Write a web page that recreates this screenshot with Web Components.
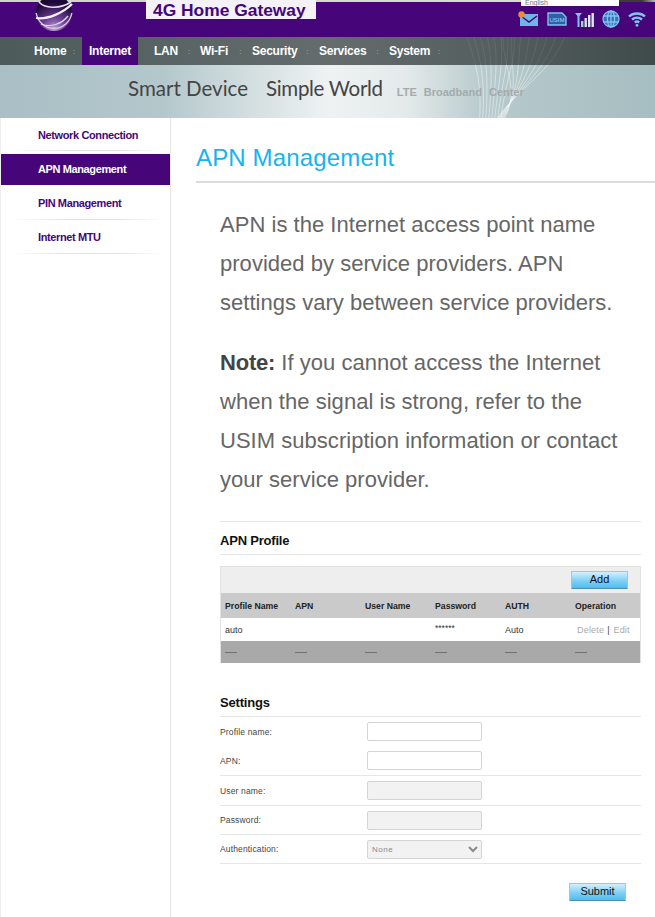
<!DOCTYPE html>
<html>
<head>
<meta charset="utf-8">
<title>APN Management</title>
<style>
html, body { margin: 0; padding: 0; background: #fff; }
body { font-family: "Liberation Sans", Arial, sans-serif; width: 655px; height: 917px; overflow: hidden; }
</style>
</head>
<body>
<gw-header></gw-header>
<gw-nav></gw-nav>
<gw-banner></gw-banner>
<gw-layout>
  <gw-sidebar slot="side"></gw-sidebar>
  <gw-intro></gw-intro>
  <gw-profile-table></gw-profile-table>
  <gw-settings></gw-settings>
</gw-layout>

<script>
class GwHeader extends HTMLElement {
  constructor() {
    super();
    this.attachShadow({mode: 'open'});
    this.shadowRoot.innerHTML = `
<style>
:host { display: block; height: 37px; overflow: hidden; }
.strip { height: 2px; background: linear-gradient(90deg, #cfd4c8 0, #d8dcd2 80%, #3c3c38 92%, #3c3c38 98%, #b8bcb0 100%); }
.bar { height: 35px; background: #46067a; display: flex; align-items: flex-start; }
.logo { width: 38px; height: 33px; margin: -2px 0 0 35px; flex: none; display: block; }
.name { margin: -2px 0 0 73px; width: 170px; height: 19px; box-sizing: border-box; background: #f4f2f6; color: #46067a;
  font-size: 17.4px; font-weight: 700; line-height: 20px; padding-left: 7px; flex: none; white-space: nowrap; }
.right { margin-left: 205px; width: 136px; flex: none; }
.lang { margin: -2px 0 0 0; width: 98px; height: 6px; background: #fff; color: #777; font-size: 7px; line-height: 5px; padding-left: 4px; box-sizing: border-box; overflow: hidden; white-space: nowrap; }
.icons { display: flex; gap: 8px; margin: 4px 0 0 -3px; align-items: center; }
svg { display: block; flex: none; }
</style>
<div class="strip"></div>
<div class="bar">
  <svg class="logo" viewBox="0 0 38 33">
    <defs>
      <radialGradient id="b" cx="0.5" cy="0.95" r="0.75"><stop offset="0" stop-color="#b9a0cf"/><stop offset="0.45" stop-color="#6e3f96"/><stop offset="1" stop-color="#1e0838"/></radialGradient>
    </defs>
    <circle cx="19" cy="13" r="18" fill="url(#b)"/>
    <path d="M1.2 13 A18 18 0 0 0 36.8 13" fill="none" stroke="#d9c8e6" stroke-width="1.4"/>
    <path d="M1 18 C12 20 28 13 37 4" fill="none" stroke="#f7f2fa" stroke-width="2.2"/>
    <path d="M4 2 C9 8 24 10 36 2" fill="none" stroke="#eadff2" stroke-width="1.6"/>
    <path d="M6 24 C15 28 27 24 33 16" fill="none" stroke="#e2d4ec" stroke-width="1.3"/>
  </svg>
  <div class="name">4G Home Gateway</div>
  <div class="right">
    <div class="lang">English</div>
    <div class="icons">
      <svg width="21" height="16" viewBox="0 0 21 16">
        <rect x="2" y="3" width="18" height="12" fill="#6fb6e8"/>
        <path d="M3 5 L11 11 L19 5" fill="none" stroke="#46067a" stroke-width="1.5"/>
        <circle cx="3.5" cy="3.5" r="3.2" fill="#f08a2c"/>
      </svg>
      <svg width="20" height="14" viewBox="0 0 20 14">
        <path d="M1 1 H15 L19 5 V13 H1 Z" fill="#2f5fa8" stroke="#7fc4ee" stroke-width="1.4"/>
        <text x="10" y="10" font-size="6" font-family="Liberation Sans" fill="#a5d8f5" text-anchor="middle">USIM</text>
      </svg>
      <svg width="19" height="15" viewBox="0 0 19 15">
        <path d="M0 1 H7 L4.5 4 V15 H2.5 V4 Z" fill="#7fc4ee"/>
        <rect x="6" y="9" width="2.4" height="6" fill="#9ed4c8"/>
        <rect x="9.5" y="6" width="2.4" height="9" fill="#cfe6ee"/>
        <rect x="13" y="3" width="2.4" height="12" fill="#dfe6f2"/>
        <rect x="16.5" y="1" width="2.4" height="14" fill="#dfe6f2"/>
      </svg>
      <svg width="18" height="18" viewBox="0 0 18 18" fill="#3a6fb8" stroke="#7fc4ee" stroke-width="1.3">
        <circle cx="9" cy="9" r="8"/>
        <ellipse cx="9" cy="9" rx="3.6" ry="8" fill="none"/>
        <path d="M9 1 V17 M1.5 6 H16.5 M1.5 12 H16.5" fill="none"/>
      </svg>
      <svg width="18" height="15" viewBox="0 0 18 15" fill="none" stroke="#7fc4ee" stroke-width="2.4">
        <path d="M1 4.5 C5 0.5 13 0.5 17 4.5"/>
        <path d="M4 7.5 C7 5 11 5 14 7.5"/>
        <path d="M6.8 10.5 C8 9.5 10 9.5 11.2 10.5"/>
        <circle cx="9" cy="13.3" r="1.4" fill="#7fc4ee" stroke="none"/>
      </svg>
    </div>
  </div>
</div>`;
  }
}
customElements.define('gw-header', GwHeader);

// label, left margin, width, width of the separator after it, active
const navItems = [
  ['Home', 34, 32, 16], ['Internet', 0, 56, 0, 1], ['LAN', 16, 24, 22], ['Wi-Fi', 0, 29, 23],
  ['Security', 0, 44, 23], ['Services', 0, 47, 23], ['System', 0, 41, 18]
];

// curves of the decoration that runs through nav and banner, both svgs start at x=465
function fanCurves(top, bottom) {
  let s = '';
  for (let i = 0; i < 8; i++) {
    s += `<path d="M${i * 7} ${top} C${i * 6 + 10} ${top + 30} ${18 + i * 3} ${top + 50} ${14 + i * 3} ${bottom}"/>`;
    s += `<path d="M${i * 9 + 38} ${top} C${i * 8 + 36} ${top + 40} ${60 - i * 2} ${top + 60} ${34 - i} ${bottom}"/>`;
  }
  return s;
}

class GwNav extends HTMLElement {
  constructor() {
    super();
    this.attachShadow({mode: 'open'});
    let html = '';
    navItems.forEach(n => {
      html += `<a class="${n[4] ? 'on' : ''}" style="margin-left:${n[1]}px;width:${n[2]}px">${n[0]}</a>`;
      if (n[3]) html += `<i style="width:${n[3]}px">:</i>`;
    });
    this.shadowRoot.innerHTML = `
<style>
:host { display: block; height: 28px; }
nav { position: relative; height: 28px; display: flex; background: linear-gradient(90deg, #4d5b5b 0, #646c6c 50%, #555f5f 75%, #3f4a4a 100%); color: #fff; font-size: 12px; font-weight: 700; line-height: 29px; letter-spacing: -0.25px; }
a { display: block; white-space: nowrap; flex: none; }
a.on { background: #46067a; text-align: center; height: 28px; }
i { display: block; flex: none; text-align: center; font-style: normal; font-weight: 400; font-size: 7px; color: #b5bcbc; letter-spacing: 0; }
svg { position: absolute; left: 465px; top: 0; }
</style>
<nav><svg width="120" height="28" fill="none" stroke="#fff" stroke-opacity=".1" stroke-width=".8">${fanCurves(-6, 90)}</svg>${html}</nav>`;
  }
}
customElements.define('gw-nav', GwNav);

class GwBanner extends HTMLElement {
  constructor() {
    super();
    this.attachShadow({mode: 'open'});
    this.shadowRoot.innerHTML = `
<style>
:host { display: block; height: 53px; }
.b { position: relative; height: 53px; display: flex; align-items: center; padding-left: 128px; box-sizing: border-box;
  background: linear-gradient(90deg, #a9bfc5 0, #b4c8cc 25%, #eef2f2 50%, #e4eaea 62%, #b7cacc 74%, #a6bdc1 100%); }
.s { font-family: "Lato", "Liberation Sans", sans-serif; font-size: 20.5px; color: #444; white-space: nowrap; margin-top: -7px; }
.s + .s { margin-left: 18px; letter-spacing: -0.3px; }
.t { margin-left: 14px; margin-top: 0; font-size: 11px; font-weight: 700; color: #a4aaac; word-spacing: 4px; white-space: nowrap; position: relative; }
svg { position: absolute; left: 465px; top: 0; }
</style>
<div class="b">
  <svg width="120" height="53" fill="none" stroke="#fff" stroke-opacity=".55" stroke-width=".8">${fanCurves(-34, 62)}</svg>
  <span class="s">Smart Device</span><span class="s">Simple World</span><span class="t">LTE Broadband Center</span>
</div>`;
  }
}
customElements.define('gw-banner', GwBanner);

class GwLayout extends HTMLElement {
  constructor() {
    super();
    this.attachShadow({mode: 'open'});
    this.shadowRoot.innerHTML = `
<style>
:host { display: flex; height: 799px; }
.side { display: block; width: 171px; flex: none; box-sizing: border-box; border-right: 1px solid #e6e6e6; border-left: 1px solid #eee; }
.main { flex: 1; min-width: 0; padding-left: 25px; }
h1 { margin: 26px 0 0; height: 37px; font-size: 24px; line-height: 28px; font-weight: 400; color: #14b4f2; border-bottom: 2px solid #dcdcdc; box-sizing: content-box; letter-spacing: 0.15px; white-space: nowrap; }
.inner { margin-left: 24px; width: 421px; }
</style>
<div class="side"><slot name="side"></slot></div>
<div class="main">
  <h1>APN Management</h1>
  <div class="inner"><slot></slot></div>
</div>`;
  }
}
customElements.define('gw-layout', GwLayout);

class GwSidebar extends HTMLElement {
  constructor() {
    super();
    this.attachShadow({mode: 'open'});
    this.shadowRoot.innerHTML = `
<style>
:host { display: block; }
a { display: block; height: 34px; box-sizing: border-box; padding-left: 37px; line-height: 34px; font-size: 11px; font-weight: 700; color: #46067a; letter-spacing: -0.38px; white-space: nowrap; position: relative; background: linear-gradient(90deg, #fff 5%, #e2e2e2 40%, #e2e2e2 70%, #fff 95%) no-repeat bottom / 100% 1px; }
a.on { background: #46067a; color: #fff; height: 31px; line-height: 31px; margin: 3px 0 1px; }
a.first { height: 33px; }
</style>
<a class="first">Network Connection</a>
<a class="on">APN Management</a>
<a>PIN Management</a>
<a>Internet MTU</a>`;
  }
}
customElements.define('gw-sidebar', GwSidebar);

class GwIntro extends HTMLElement {
  constructor() {
    super();
    this.attachShadow({mode: 'open'});
    this.shadowRoot.innerHTML = `
<style>
:host { display: block; height: 316px; padding-top: 22px; box-sizing: content-box; border-bottom: 1px solid #e6e6e6; color: #666; font-size: 22px; line-height: 39px; letter-spacing: 0.03px; }
p { margin: 0 0 21px; white-space: nowrap; }
b { color: #444; font-weight: 700; letter-spacing: -0.2px; }
</style>
<p>APN is the Internet access point name<br>provided by service providers. APN<br>settings vary between service providers.</p>
<p><b>Note:</b> If you cannot access the Internet<br>when the signal is strong, refer to the<br>USIM subscription information or contact<br>your service provider.</p>`;
  }
}
customElements.define('gw-intro', GwIntro);

class GwButton extends HTMLElement {
  constructor() {
    super();
    this.attachShadow({mode: 'open'});
    this.shadowRoot.innerHTML = `
<style>
:host { display: block; width: 57px; height: 18px; box-sizing: border-box; border: 1px solid #9cc8de; border-bottom-color: #4f8fb4; border-radius: 1px;
  background: linear-gradient(180deg, #d5effb 0, #7fd0f5 55%, #4fbcef 100%); color: #111; font-size: 11px; line-height: 14px; text-align: center; }
</style>
<slot></slot>`;
  }
}
customElements.define('gw-button', GwButton);

class GwProfileTable extends HTMLElement {
  constructor() {
    super();
    this.attachShadow({mode: 'open'});
    const dash = Array(6).fill('<span></span>').join('');
    this.shadowRoot.innerHTML = `
<style>
:host { display: block; font-size: 9px; color: #333; }
h2 { margin: 0; height: 32px; line-height: 37px; font-size: 13px; font-weight: 700; color: #111; border-bottom: 1px solid #e6e6e6; letter-spacing: -0.2px; }
.t { margin-top: 11px; border: 1px solid #e2e2e2; height: 97px; box-sizing: border-box; }
.tools { height: 26px; background: #eee; display: flex; justify-content: flex-end; padding: 4px 12px 0 0; box-sizing: border-box; }
.r { display: grid; grid-template-columns: repeat(6, 70px); padding-left: 4px; align-items: center; }
.h { height: 25px; background: #cacaca; font-weight: 700; color: #222; font-size: 8.7px; white-space: nowrap; }
.d { height: 23px; background: #fff; }
.g { height: 22px; background: #a9a9a9; }
.g span::before { content: ""; display: block; width: 12px; height: 1px; background: #6f6f6f; }
.pw { font-size: 8.5px; padding-bottom: 3px; }
.op { color: #aaa; white-space: nowrap; letter-spacing: 0.2px; margin-left: 2px; }
.op em { font-style: normal; color: #444; margin: 0 1px 0 3px; }
</style>
<h2>APN Profile</h2>
<div class="t">
  <div class="tools"><gw-button>Add</gw-button></div>
  <div class="r h"><span>Profile Name</span><span>APN</span><span>User Name</span><span>Password</span><span>AUTH</span><span>Operation</span></div>
  <div class="r d"><span>auto</span><span></span><span></span><span class="pw">******</span><span>Auto</span><span class="op">Delete<em>|</em> Edit</span></div>
  <div class="r g">${dash}</div>
</div>`;
  }
}
customElements.define('gw-profile-table', GwProfileTable);

class GwField extends HTMLElement {
  static get observedAttributes() { return ['label']; }
  constructor() {
    super();
    this.attachShadow({mode: 'open'});
    this.shadowRoot.innerHTML = `
<style>
:host { display: flex; align-items: center; height: 29px; box-sizing: border-box; font-size: 8.5px; color: #444; letter-spacing: 0.15px; }
:host([line]) { border-bottom: 1px solid #e6e6e6; }
label { width: 147px; flex: none; }
::slotted(*) { display: block; }
</style>
<label></label><slot></slot>`;
  }
  attributeChangedCallback(name, oldValue, newValue) {
    this.shadowRoot.querySelector('label').textContent = newValue;
  }
}
customElements.define('gw-field', GwField);

class GwSettings extends HTMLElement {
  constructor() {
    super();
    this.attachShadow({mode: 'open'});
    this.shadowRoot.innerHTML = `
<style>
:host { display: block; }
h2 { margin: 29px 0 0; height: 24px; line-height: 22px; font-size: 13px; font-weight: 700; color: #111; border-bottom: 1px solid #e6e6e6; letter-spacing: -0.2px; box-sizing: content-box; }
input, select { width: 115px; height: 19px; box-sizing: border-box; border: 1px solid #d4d4d4; border-radius: 2px; background: #fff; margin: 0; padding: 0; outline: none; display: block; }
input[disabled] { background: #f2f2f2; }
select { background: #f2f2f2; color: #8a8a8a; opacity: 1; font: 400 8px "Liberation Sans", sans-serif; letter-spacing: 0.5px; }
.sub { display: flex; justify-content: flex-end; padding: 19px 15px 0 0; }
</style>
<h2>Settings</h2>
<gw-field label="Profile name:"><input type="text"></gw-field>
<gw-field label="APN:" line style="height:30px"><input type="text"></gw-field>
<gw-field label="User name:" line style="height:30px"><input type="text" disabled></gw-field>
<gw-field label="Password:" line><input type="password" disabled></gw-field>
<gw-field label="Authentication:" line><select><option>None</option></select></gw-field>
<div class="sub"><gw-button>Submit</gw-button></div>`;
  }
}
customElements.define('gw-settings', GwSettings);
</script>
</body>
</html>
